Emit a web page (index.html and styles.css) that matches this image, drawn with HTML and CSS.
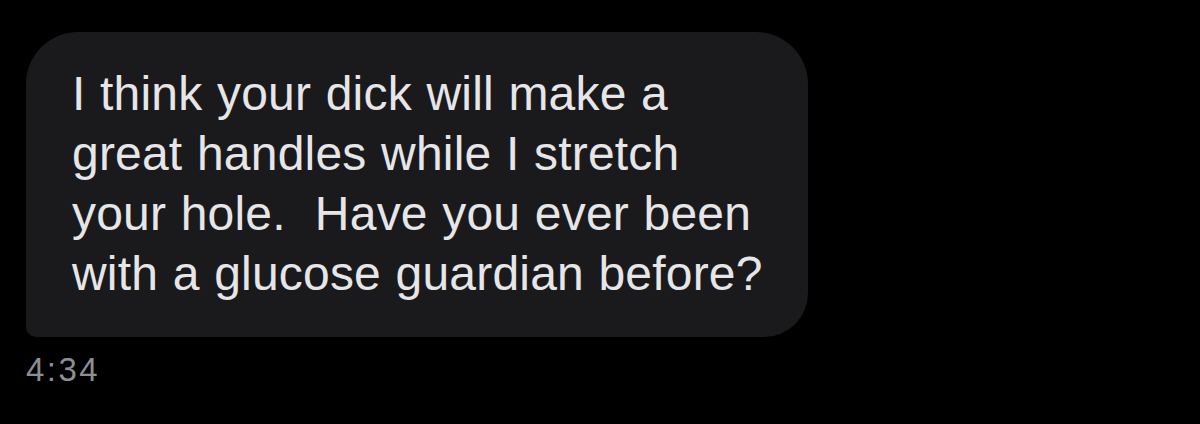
FILE: index.html
```html
<!DOCTYPE html>
<html lang="en">
<head>
    <meta charset="UTF-8">
    <meta name="viewport" content="width=device-width, initial-scale=1.0">
    <title>Message</title>
    <link rel="stylesheet" href="styles.css">
</head>
<body>
    <div class="thread">
        <div class="bubble">
            <p class="text">I think your dick will make a
great handles while I stretch
your hole.  Have you ever been
with a glucose guardian before?</p>
        </div>
        <div class="time">4:34</div>
    </div>
</body>
</html>
```

FILE: styles.css
```css
body {
    margin: 0;
    background-color: #000;
    font-family: "Liberation Sans", Arial, sans-serif;
    height: 424px;
    overflow: hidden;
}
.thread {
    padding: 32px 0 0 26px;
}
.bubble {
    width: 782px;
    height: 305px;
    box-sizing: border-box;
    background-color: #1a1a1c;
    border-radius: 52px 52px 44px 10px;
    padding: 32px 0 0 46px;
}
.text {
    margin: 0;
    color: #e6e6e8;
    font-size: 48px;
    line-height: 60px;
    letter-spacing: 0.2px;
    word-spacing: 1px;
    white-space: pre;
}
.time {
    margin-top: 14px;
    color: #8e8e93;
    font-size: 33px;
    letter-spacing: 2.5px;
}
```
